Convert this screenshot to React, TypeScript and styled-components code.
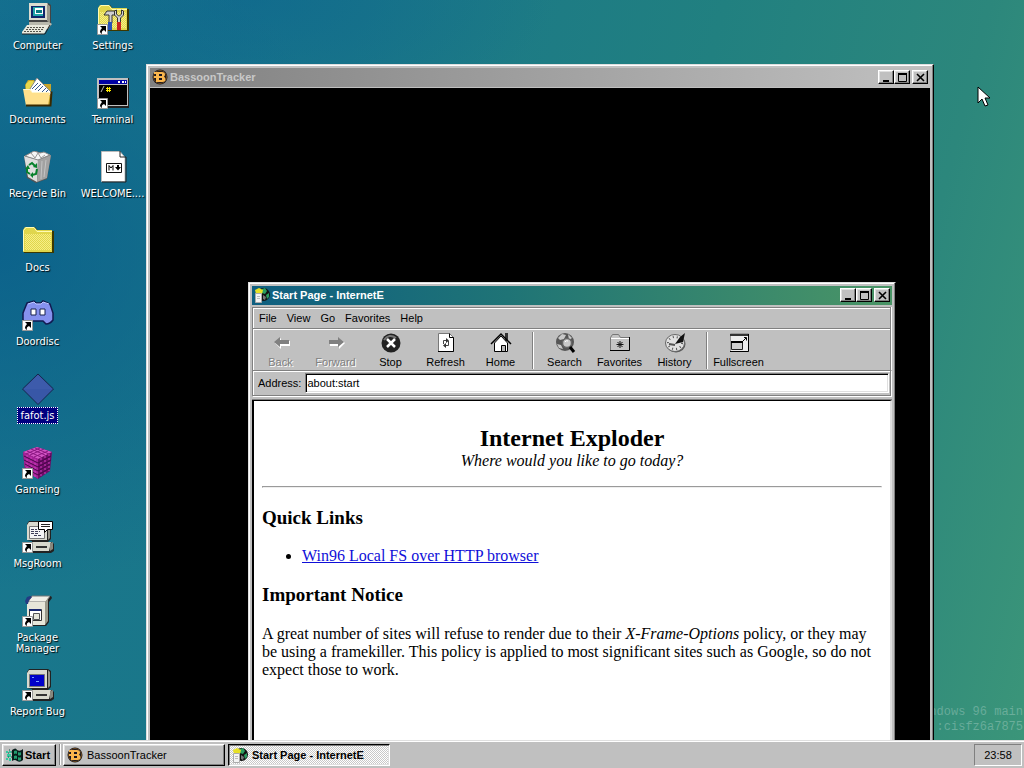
import React from "react";
import styled, { createGlobalStyle, css } from "styled-components";

const GlobalStyle = createGlobalStyle`
  * { box-sizing: border-box; }
  html, body, #root { height: 100%; margin: 0; }
  body { overflow: hidden; }
  button, input { font: inherit; color: inherit; }
`;

const raised = css`
  border: 1px solid;
  border-color: #fff #000 #000 #fff;
  box-shadow: inset -1px -1px 0 #808080, inset 1px 1px 0 #dfdfdf;
`;

/* ---------- Desktop ---------- */

const Screen = styled.div`
  display: flex;
  flex-direction: column;
  height: 100vh;
  font: 11px/14px "Liberation Sans", Arial, sans-serif;
  color: #000;
`;

const Desktop = styled.main`
  position: relative;
  flex: 1;
  min-height: 0;
  overflow: hidden;
  background:
    radial-gradient(ellipse 36% 46% at 0% 34%, rgba(8, 92, 138, 0.75), rgba(8, 92, 138, 0)),
    radial-gradient(ellipse 30% 18% at 24% 0%, rgba(12, 100, 142, 0.6), rgba(12, 100, 142, 0)),
    linear-gradient(104deg, #187690 0%, #1a7789 30%, #218080 60%, #2c877c 82%, #3b9579 100%);
`;

const IconGrid = styled.div`
  display: grid;
  height: 100%;
  grid-auto-flow: column;
  grid-template-rows: repeat(auto-fill, 74px);
  grid-auto-columns: 75px;
  justify-content: start;
`;

const Shortcut = styled.button`
  display: flex;
  flex-direction: column;
  align-items: center;
  gap: 2px;
  padding: 3px 0 0;
  border: 0;
  background: none;
`;

const ShortcutLabel = styled.span<{ $selected?: boolean }>`
  max-width: 72px;
  padding: 2px;
  border: 1px dotted ${(p) => (p.$selected ? "#fff" : "transparent")};
  background: ${(p) => (p.$selected ? "#000080" : "none")};
  font: 11px/11px "DejaVu Sans Condensed", "DejaVu Sans", sans-serif;
  color: #fff;
  text-shadow: ${(p) => (p.$selected ? "none" : "1px 1px 1px #000")};
`;

const BuildMark = styled.p`
  position: absolute;
  right: 1px;
  bottom: 5px;
  margin: 0;
  text-align: right;
  font: 12px/15px "Liberation Mono", monospace;
  color: rgba(255, 255, 255, 0.25);
`;

const Pointer = styled.svg`
  position: absolute;
  left: 977px;
  top: 86px;
`;

/* ---------- Windows ---------- */

const Frame = styled.section<{ $x: number; $y: number; $w: number; $h: number }>`
  position: absolute;
  left: ${(p) => p.$x}px;
  top: ${(p) => p.$y}px;
  width: ${(p) => p.$w}px;
  height: ${(p) => p.$h}px;
  display: flex;
  flex-direction: column;
  gap: 1px;
  padding: 3px;
  background: #c0c0c0;
  border: 1px solid;
  border-color: #dfdfdf #000 #000 #dfdfdf;
  box-shadow: inset -1px -1px 0 #808080, inset 1px 1px 0 #fff;
`;

const TitleBar = styled.header<{ $active?: boolean }>`
  display: flex;
  align-items: center;
  flex: none;
  height: 19px;
  padding: 0 2px 1px;
  gap: 2px;
  background: ${(p) =>
    p.$active
      ? "linear-gradient(90deg, #0f5f80, #1f7476 40%, #4a9566)"
      : "linear-gradient(90deg, #808080, #c0c0c0)"};
  color: ${(p) => (p.$active ? "#fff" : "#c8c8c8")};
`;

const Title = styled.h1`
  flex: 1;
  margin: 0;
  font-size: 11px;
  line-height: 14px;
  font-weight: bold;
`;

const CaptionGroup = styled.div`
  display: flex;
`;

const CaptionButton = styled.button`
  display: flex;
  width: 16px;
  height: 14px;
  padding: 1px 2px;
  background: #c0c0c0;
  color: #000;
  ${raised}
`;

const BlackCanvas = styled.div`
  flex: 1;
  background: #000;
`;

/* ---------- Browser ---------- */

const Band = styled.div`
  display: flex;
  flex: none;
  border: 1px solid #808080;
  border-bottom: 0;
  box-shadow: inset 1px 1px 0 #fff, 1px 0 0 #fff;
`;

const MenuBand = styled(Band)`
  height: 21px;
  margin-top: 1px;
  padding: 2px 3px 2px;
`;

const MenuItem = styled.button`
  padding: 0 3px;
  margin-right: 4px;
  border: 0;
  background: none;
`;

const ToolBand = styled(Band)`
  height: 42px;
  padding: 3px 0 1px;
`;

const ToolButton = styled.button`
  display: flex;
  flex-direction: column;
  align-items: center;
  width: 55px;
  padding: 0;
  gap: 1px;
  border: 0;
  background: none;
  white-space: nowrap;
  &:disabled {
    color: #808080;
    text-shadow: 1px 1px 0 #fff;
  }
`;

const Divider = styled.span`
  width: 2px;
  margin: 0 3px 0 4px;
  border-left: 1px solid #808080;
  border-right: 1px solid #fff;
`;

const AddressBand = styled(Band)`
  align-items: center;
  height: 26px;
  gap: 4px;
  padding: 0 1px 1px 5px;
  border-bottom: 1px solid #808080;
  box-shadow: inset 1px 1px 0 #fff, 1px 1px 0 #fff;
`;

const AddressInput = styled.input`
  flex: 1;
  min-width: 0;
  height: 20px;
  padding: 0 1px;
  background: #fff;
  border: 1px solid;
  border-color: #808080 #fff #fff #808080;
  box-shadow: inset 1px 1px 0 #000, inset -1px -1px 0 #dfdfdf;
  outline: 0;
`;

const Toolbars = styled.div`
  display: flex;
  flex-direction: column;
  padding-right: 1px;
  margin-bottom: 3px;
`;

const Viewport = styled.div`
  flex: 1;
  min-height: 0;
  overflow: hidden;
  padding: 24px 8px 0;
  background: #fff;
  border: 2px solid;
  border-color: #000 #dfdfdf #dfdfdf #000;
  border-top-width: 1px;
  box-shadow: 0 -1px 0 #808080;
  font: 16px/18px "Liberation Serif", "Times New Roman", serif;
`;

const PageHead = styled.div`
  text-align: center;
  margin-bottom: 16px;
`;

const PageTitle = styled.h2`
  margin: 0;
  font-size: 24px;
  line-height: 27px;
`;

const Rule = styled.hr`
  height: 2px;
  margin: 0;
  border: 1px solid;
  border-color: #9a9a9a #eee #eee #9a9a9a;
`;

const Heading = styled.h3`
  margin: 19px 0 18px;
  font-size: 19px;
  line-height: 22px;
`;

const Links = styled.ul`
  margin: 0;
  padding-left: 40px;
`;

const PageLink = styled.a`
  color: #0f0fd8;
`;

const Text = styled.p`
  margin: 19px 0 0;
`;

/* ---------- Taskbar ---------- */

const Taskbar = styled.footer`
  display: flex;
  flex: none;
  height: 28px;
  gap: 3px;
  padding: 2px;
  background: #c0c0c0;
  border-top: 1px solid #dfdfdf;
  box-shadow: inset 0 1px 0 #fff;
`;

const StartButton = styled.button`
  display: flex;
  align-items: center;
  width: 54px;
  gap: 2px;
  height: 22px;
  margin-top: 1px;
  padding: 0 2px 0 3px;
  background: #c0c0c0;
  font-weight: bold;
  ${raised}
`;

const Grip = styled.span`
  width: 2px;
  margin: 1px -1px 1px 0;
  border-left: 1px solid #808080;
  border-right: 1px solid #fff;
`;

const TaskButton = styled.button<{ $active?: boolean }>`
  display: flex;
  align-items: center;
  flex: 0 1 162px;
  height: 22px;
  gap: 4px;
  margin-top: 1px;
  padding: 0 3px;
  background: #c0c0c0;
  text-align: left;
  ${raised}
  ${(p) =>
    p.$active &&
    css`
      font-weight: bold;
      background: repeating-conic-gradient(#fff 0 25%, #c8c8c8 0 50%) 0 0 / 2px 2px;
      border-color: #000 #fff #fff #000;
      box-shadow: inset 1px 1px 0 #808080, inset -1px -1px 0 #dfdfdf;
    `}
`;

const Clock = styled.time`
  width: 48px;
  height: 22px;
  margin: 1px 0 0 auto;
  line-height: 20px;
  text-align: center;
  border: 1px solid;
  border-color: #808080 #fff #fff #808080;
`;

/* ---------- Drawings ---------- */

const Icon32 = ({ children }: { children: React.ReactNode }) => (
  <svg width="32" height="32" viewBox="0 0 32 32" aria-hidden="true">{children}</svg>
);

const LinkArrow = () => (
  <g>
    <path d="M.5 21.500h10v10h-10z" fill="#fff" stroke="#999" />
    <path d="M3 23h6v6L7 27q-3 1-2 4Q1 29 5 25z" fill="#000" />
  </g>
);

const ComputerIcon = () => (
  <Icon32>
    <path d="M8 0h18l3 2v20l-3 2H10l-3-4z" fill="#444" />
    <path d="M7 0h18l1 1v16H7z" fill="#dcdcd0" />
    <path d="M25 1l3 2v17l-3-2z" fill="#99998c" />
    <path d="M9 3h14v12H9z" fill="#10256a" />
    <path d="M11 4h10v9H11z" fill="#22a5aa" />
    <path d="M13 5h8v6h-8z" fill="#fff" /><path d="M14 7h6v3h-6z" fill="#087b84" />
    <path d="M7 19h20l3 2-4 5H7z" fill="#b9b9ad" />
    <path d="M5 22h22l-5 9H0v-2z" fill="#e9e9dd" />
    <path d="M5 24.500h18M4 26.500h18M2 28.500h18" stroke="#55554c" strokeDasharray="2 1" />
    <path d="M0 31h23l5-9" fill="none" stroke="#222" />
  </Icon32>
);

const OpenFolderIcon = () => (
  <Icon32>
    <path d="M3 8l3-5h6l3 4h14v21H5z" fill="#c8a52b" />
    <path d="M4 7l3-3h4l3 3v9H4z" fill="#e8d94c" />
    <path d="M6 15L15 1l15 15-3 3H7z" fill="#fff" stroke="#888" />
    <path d="M10 12l6-6M13 13l6-6M16 14l5-5M20 15l4-4M24 15l2-2" stroke="#35588c" />
    <path d="M1 12h7l2 3h15l3 1-2 13H4z" fill="#ffe08c" />
    <path d="M1.500 12.500H8l2 3h16" fill="none" stroke="#fff6ca" />
    <path d="M4 28.500h24.500l1-14" fill="none" stroke="#3a2900" strokeWidth="2" />
  </Icon32>
);

const BinIcon = () => (
  <Icon32>
    <path d="M2 5L13 0l16 4-4 24-11 4-9-5z" fill="#555" />
    <path d="M2 5l14 4-1 22-9-5z" fill="#dedede" />
    <path d="M16 9l13-5-4 23-10 4z" fill="#a2a2a2" />
    <path d="M3 5l9-5 6 2 4-1 6 3-12 5z" fill="#f6f6f6" stroke="#888" />
    <path d="M9 2l4 5 3-5 3 5 4-3" fill="none" stroke="#999" />
    <path d="M20 10l-1 18M24 9l-2 17" stroke="#c4c4c4" />
    <g fill="none" stroke="#07812c" strokeWidth="2">
      <path d="M7 14l3-2 3 3M5 17v4l3 2M15 18l-1 5-4 1" />
    </g>
    <path d="M15 12v5l-4-1zM3 18l3-4 2 4zM11 21v6l-3-3z" fill="#07812c" />
  </Icon32>
);

const FolderShape = () => (
  <g>
    <path d="M2 9V5l2-3h9l3 4h16v22H2z" fill="#3d3800" />
    <path d="M1 8V5l2-3h9l3 3h15v22H1z" fill="#e0d64c" />
    <path d="M1.500 26V5.500L4 2.500h8l3 4h15" fill="none" stroke="#fffcb5" />
    <path d="M3 9.500h26M3 11.500h26M3 13.500h26M3 15.500h26M3 17.500h26M3 19.500h26M3 21.500h26M3 23.500h26" stroke="#f7ee86" strokeDasharray="1 1" />
    <path d="M4 10.500h25M4 12.500h25M4 14.500h25M4 16.500h25M4 18.500h25M4 20.500h25M4 22.500h25M4 24.500h25" stroke="#f7ee86" strokeDasharray="1 1" />
  </g>
);

const FolderIcon = () => <Icon32><FolderShape /></Icon32>;

const SettingsIcon = () => (
  <Icon32>
    <FolderShape />
    <path d="M7 12l3-4h8v4h-3v8h-3v-8z" fill="#d0d0d0" stroke="#333" />
    <path d="M19.500 7v4l2 2h1l2-2V7l2 1v4l-3 3v5h-3v-5l-3-3V8z" fill="#d0d0d0" stroke="#333" />
    <path d="M11 19h4v8h-4z" fill="#2752b8" /><path d="M20 19h4v8h-4z" fill="#c42323" />
    <LinkArrow />
  </Icon32>
);

const TerminalIcon = () => (
  <Icon32>
    <path d="M0 1h32v30H0z" fill="#222" /><path d="M0 1h31v28H0z" fill="#c0c0c0" />
    <path d="M2 3h28v4H2z" fill="#0000a5" /><path d="M2 8h28v20H2z" fill="#000" />
    <path d="M21 5h2M25 5h2M28 5h1" stroke="#fff" strokeWidth="2" />
    <path d="M4 15l3-6" stroke="#bbb" /><path d="M10.500 10v5M12.500 10v5M9 11.500h5M9 13.500h5" stroke="#ffe900" />
    <LinkArrow />
  </Icon32>
);

const MarkdownIcon = () => (
  <Icon32>
    <path d="M4.500.500H23l5 6v24H4.500z" fill="#fff" stroke="#bbb" />
    <path d="M23 0v6h6v25H5" fill="none" stroke="#222" />
    <path d="M9.500 12.500h15v9h-15z" fill="#fff" stroke="#111" />
    <path d="M12 19.500v-5l2 2.500 2-2.500v5" fill="none" stroke="#000" />
    <path d="M20 14h2v2h2l-3 3.500-3-3.500h2z" />
  </Icon32>
);

const DoordiscIcon = () => (
  <Icon32>
    <path d="M5 4l7-2 2 2h5l2-2 7 3 3 9v7q-3 4-7 4l-3-3H11l-3 3q-5-1-7-4v-7z" fill="#8591ee" stroke="#111b51" strokeWidth="1.500" />
    <path d="M6 5l6-2 2 2h5l2-2 6 2" fill="none" stroke="#bcc7ff" />
    <path d="M9 10h5v6H9zM18 10h5v6h-5z" fill="#fff" stroke="#18204f" />
    <LinkArrow />
  </Icon32>
);

const DiamondIcon = () => (
  <Icon32>
    <path d="M16 1l15.500 15L16 31.500.500 16z" fill="#3857a7" stroke="#17264c" />
    <path d="M16 2L2 16h28z" fill="#4866b5" opacity=".3" />
  </Icon32>
);

const CubeIcon = () => (
  <Icon32>
    <path d="M1 5L15 0l15 5-2 19-12 8L3 23z" fill="#6e0c67" />
    <path d="M1 5L15 0l15 5-14 7z" fill="#d255c4" /><path d="M1 5l15 7v20L3 23z" fill="#a52398" />
    <path d="M5 4l14 6M9 2l14 6M13 1l14 6M26 4l-14 6M22 2L8 8M18 1L4 7" stroke="#8b1681" />
    <path d="M5 8v16M9 10v17M13 12v18M19 11v19M23 9v18M27 7v17" stroke="#d13ec2" strokeDasharray="2 2" />
    <path d="M2 9l14 7 13-7M2 13l14 7 13-7M3 17l13 7 12-7M3 21l13 7 12-7" fill="none" stroke="#48074a" />
    <LinkArrow />
  </Icon32>
);

const PcBase = ({ screen }: { screen: string }) => (
  <g>
    <path d="M7 0h19l3 2v16l-3 3h4l2 2v7l-3 2H10V20l-5-1V3z" fill="#222" />
    <path d="M7 1h18v18H5V4z" fill="#dadacf" /><path d="M26 1l2 2v14l-2 2z" fill="#96968b" />
    <path d="M7.500 5.500h15v12h-15z" fill={screen} stroke="#777" />
    <path d="M9 21h20l-2 9H9z" fill="#d9d9ce" /><path d="M28 22l3-1v7l-3 2z" fill="#88887e" />
    <path d="M14 26h11" stroke="#333" strokeWidth="2" />
  </g>
);

const MsgIcon = () => (
  <Icon32>
    <PcBase screen="#f4f4f4" />
    <path d="M9 8.500h6M9 10.500h9M9 12.500h7M12 14.500h7" stroke="#3e3e58" strokeDasharray="3 1" />
    <path d="M16.500.500h14v8h-5l-3 3v-3h-6z" fill="#fff" stroke="#000" />
    <path d="M19 3.500h9M19 5.500h9" stroke="#222" />
    <LinkArrow />
  </Icon32>
);

const PackageIcon = () => (
  <Icon32>
    <path d="M5 5l4-4h20l1 2-3 4v20l-3 4H6z" fill="#222" />
    <path d="M6 7l4-6h18l-4 6z" fill="#f0f0e8" stroke="#777" /><path d="M5 7h18v23H5z" fill="#e6e6da" />
    <path d="M23 7l3-4v23l-3 4z" fill="#99998b" />
    <path d="M3 6l2-4 3-1 2 1-3 3-1 4H4z" fill="#233b83" />
    <path d="M7.500 14.500h12v11h-12z" fill="#fff" stroke="#333" /><path d="M7 14h12v2H7z" fill="#17276f" />
    <path d="M11.500 18.500h6v6h-6z" fill="#e6e6da" stroke="#555" />
    <LinkArrow />
  </Icon32>
);

const BugIcon = () => (
  <Icon32>
    <PcBase screen="#0000c8" />
    <path d="M10 8.500h2M14 12.500h3" stroke="#7aa0ff" />
    <LinkArrow />
  </Icon32>
);

const BassoonIcon = () => (
  <svg width="16" height="16" viewBox="0 0 16 16" aria-hidden="true">
    <circle cx="8" cy="8" r="7.500" fill="#17151f" />
    <circle cx="8" cy="8" r="6.500" fill="none" stroke="#6b4a20" />
    <path fillRule="evenodd" d="M2 3h8q3 0 3 2.500 0 1.500-1 2.300 1.500.700 1.500 2.500 0 2.700-3 2.700H4V9H2V7h2V5H2zM7 5v2h3V5zM7 9v2h3V9z" fill="#f9b54c" />
  </svg>
);

const BrowserIcon = () => (
  <svg width="16" height="16" viewBox="0 0 16 16" aria-hidden="true">
    <circle cx="9.500" cy="7.500" r="6.500" fill="#111" />
    <path d="M8 2l3-1 2 3-2 3-3-1zM12 8l3-2v4l-2 2z" fill="#2b9d60" />
    <path d="M9 8l3 2-1 3-2-1z" fill="#777" />
    <path d="M1 3l4-2 4 2-1 4H2z" fill="#e7e126" />
    <path d="M1.500 6.500h6v9h-6z" fill="#f4f4f4" stroke="#aaa" />
    <path d="M3 9.500h3M3 11.500h3" stroke="#bbb" />
  </svg>
);

const FlagIcon = () => (
  <svg width="17" height="16" viewBox="0 0 17 16" aria-hidden="true">
    <path d="M6 3q4-3 5 0 3 2 6-1v11q-3 3-6 1-2-2-5 0z" fill="#071d1b" />
    <path d="M8 4q2-1 3 0v3q-1-1-3 0zM12 5q2 1 3 0v3q-2 1-3 0zM8 9q2-1 3 0v3q-1-1-3 0zM12 10q2 1 3 0v3q-2 1-3 0z" fill="#219d70" />
    <path d="M0 4h2v2H0zM3 4h2v2H3zM1 7h4v3H1zM0 11h2v2H0zM3 11h2v3H3z" fill="#33caa0" />
    <path d="M3 3h1M2 6h1M5 5h1M2 10h1M5 10h1" stroke="#054b43" />
  </svg>
);

const Tool = ({ children }: { children: React.ReactNode }) => (
  <svg width="22" height="22" viewBox="0 0 22 22" aria-hidden="true">{children}</svg>
);

const toolArt: Record<string, React.ReactNode> = {
  Back: <Tool><path d="M5 11l6-5v3h9v5h-9v3z" fill="#fff" /><path d="M4 10l6-5v3h9v4h-9v3z" fill="#808080" /></Tool>,
  Forward: <Tool><path d="M20 11l-6-5v3H5v5h9v3z" fill="#fff" /><path d="M19 10l-6-5v3H4v4h9v3z" fill="#808080" /></Tool>,
  Stop: (
    <Tool>
      <circle cx="11" cy="11" r="9.500" fill="#222" />
      <path d="M4 8q5-7 12-2" stroke="#777" strokeWidth="2" fill="none" />
      <path d="M7 7l8 8M15 7l-8 8" stroke="#fff" strokeWidth="2.500" />
    </Tool>
  ),
  Refresh: (
    <Tool>
      <path d="M3.500 1.500h11l4 4v14h-15z" fill="#fff" stroke="#777" />
      <path d="M14.500 1.500v4h4v14H3" fill="none" stroke="#000" />
      <path d="M8.500 12V8.500H11M13.500 9v4.500H11" fill="none" stroke="#444" />
      <path d="M11 6l3 2.500-3 2.500zM11 11l-3 2.500 3 2.500z" fill="#333" />
    </Tool>
  ),
  Home: (
    <Tool>
      <path d="M15 1h3v8h-3z" fill="#333" />
      <path d="M4.500 11v8.500h13V11L11 4z" fill="#fff" stroke="#000" />
      <path d="M1 12L11 2l10 10" fill="none" stroke="#000" strokeWidth="1.500" />
      <path d="M11.500 13.500h4v6h-4z" fill="#bbb" stroke="#000" />
    </Tool>
  ),
  Search: (
    <Tool>
      <circle cx="11" cy="10" r="9" fill="#555" />
      <path d="M4 6l4-4 4 1-2 4-4 1zM14 2l4 4-3 2zM3 12l4 1 2 4-4-1z" fill="#c8c8c8" />
      <circle cx="13" cy="11" r="4.500" fill="#c9c9c9" stroke="#666" strokeWidth="1.500" />
      <path d="M11 10q1-2 3-1" stroke="#fff" fill="none" />
      <path d="M16 15l4 5" stroke="#000" strokeWidth="3" />
    </Tool>
  ),
  Favorites: (
    <Tool>
      <path d="M1.500 18.500V5.500l2-3h6l2 3h9v13z" fill="#c4c4c4" stroke="#777" />
      <path d="M2 6.500h18" stroke="#fff" /><path d="M1 18.500h19.500V5" fill="none" stroke="#000" />
      <path d="M11 9v7M7.500 12.500h7M8.500 10l5 5M13.500 10l-5 5" stroke="#111" />
    </Tool>
  ),
  History: (
    <Tool>
      <ellipse cx="12" cy="12" rx="9.500" ry="8.500" fill="#555" />
      <ellipse cx="11" cy="11" rx="9.500" ry="8.500" fill="#e1e1e1" stroke="#666" />
      <ellipse cx="11" cy="11" rx="7" ry="6" fill="none" stroke="#555" strokeWidth="2" strokeDasharray="1 3" />
      <path d="M11 12l5-7 5-4-2 9z" fill="#111" /><path d="M5 12l6 1" stroke="#555" strokeWidth="2" />
    </Tool>
  ),
  Fullscreen: (
    <Tool>
      <path d="M2.500 1.500h18v18h-18z" fill="#eee" stroke="#999" /><path d="M2 3h18" stroke="#333" strokeWidth="2" />
      <path d="M2 19.500h18.500V2" fill="none" stroke="#000" />
      <path d="M3.500 10.500h11v7h-11z" fill="#d0d0d0" stroke="#222" /><path d="M3 10h12" stroke="#000" strokeWidth="2" />
      <path d="M15 9l3-3M16 5.500h2.500v3" fill="none" stroke="#000" />
    </Tool>
  ),
};

const Glyph = ({ children }: { children: React.ReactNode }) => (
  <svg width="10" height="10" viewBox="0 0 10 10" fill="none" stroke="#000" aria-hidden="true">
    {children}
  </svg>
);

/* ---------- Content ---------- */

const shortcuts: { label: string; art: React.ReactNode; selected?: boolean }[] = [
  { label: "Computer", art: <ComputerIcon /> },
  { label: "Documents", art: <OpenFolderIcon /> },
  { label: "Recycle Bin", art: <BinIcon /> },
  { label: "Docs", art: <FolderIcon /> },
  { label: "Doordisc", art: <DoordiscIcon /> },
  { label: "fafot.js", art: <DiamondIcon />, selected: true },
  { label: "Gameing", art: <CubeIcon /> },
  { label: "MsgRoom", art: <MsgIcon /> },
  { label: "Package Manager", art: <PackageIcon /> },
  { label: "Report Bug", art: <BugIcon /> },
  { label: "Settings", art: <SettingsIcon /> },
  { label: "Terminal", art: <TerminalIcon /> },
  { label: "WELCOME....", art: <MarkdownIcon /> },
];

const WindowTitle = ({ icon, title, active }: { icon: React.ReactNode; title: string; active?: boolean }) => (
  <TitleBar $active={active}>
    {icon}
    <Title>{title}</Title>
    <CaptionGroup>
      <CaptionButton aria-label="Minimize"><Glyph><path d="M2 9h6" strokeWidth="2" /></Glyph></CaptionButton>
      <CaptionButton aria-label="Maximize">
        <Glyph><path d="M1 2h9" strokeWidth="2" /><path d="M1.500 2v7.500h8V2" /></Glyph>
      </CaptionButton>
    </CaptionGroup>
    <CaptionButton aria-label="Close"><Glyph><path d="M2 2l7 7M9 2L2 9" strokeWidth="1.600" /></Glyph></CaptionButton>
  </TitleBar>
);

const ToolItem = ({ name, disabled }: { name: string; disabled?: boolean }) => (
  <ToolButton disabled={disabled}>
    {toolArt[name]}
    {name}
  </ToolButton>
);

export default function App() {
  return (
    <Screen>
      <GlobalStyle />
      <Desktop>
        <IconGrid>
          {shortcuts.map((s) => (
            <Shortcut key={s.label}>
              {s.art}
              <ShortcutLabel $selected={s.selected}>{s.label}</ShortcutLabel>
            </Shortcut>
          ))}
        </IconGrid>
        <BuildMark>Windows 96 main<br />:cisfz6a7875</BuildMark>

        <Frame $x={146} $y={64} $w={788} $h={720}>
          <WindowTitle icon={<BassoonIcon />} title="BassoonTracker" />
          <BlackCanvas />
        </Frame>

        <Frame $x={248} $y={282} $w={648} $h={500}>
          <WindowTitle icon={<BrowserIcon />} title="Start Page - InternetE" active />
          <Toolbars>
            <MenuBand as="nav">
              {["File", "View", "Go", "Favorites", "Help"].map((m) => (
                <MenuItem key={m}>{m}</MenuItem>
              ))}
            </MenuBand>
            <ToolBand>
              <ToolItem name="Back" disabled />
              <ToolItem name="Forward" disabled />
              <ToolItem name="Stop" />
              <ToolItem name="Refresh" />
              <ToolItem name="Home" />
              <Divider />
              <ToolItem name="Search" />
              <ToolItem name="Favorites" />
              <ToolItem name="History" />
              <Divider />
              <ToolItem name="Fullscreen" />
            </ToolBand>
            <AddressBand>
              <label htmlFor="address">Address:</label>
              <AddressInput id="address" defaultValue="about:start" />
            </AddressBand>
          </Toolbars>
          <Viewport>
            <PageHead>
              <PageTitle>Internet Exploder</PageTitle>
              <em>Where would you like to go today?</em>
            </PageHead>
            <Rule />
            <Heading>Quick Links</Heading>
            <Links>
              <li><PageLink href="#local-fs">Win96 Local FS over HTTP browser</PageLink></li>
            </Links>
            <Heading>Important Notice</Heading>
            <Text>
              A great number of sites will refuse to render due to their <em>X-Frame-Options</em> policy,
              or they may be using a framekiller. This policy is applied to most significant sites such as
              Google, so do not expect those to work.
            </Text>
          </Viewport>
        </Frame>

        <Pointer width="13" height="21" viewBox="0 0 13 21" aria-hidden="true">
          <path d="M1 1v16l4-4 3 7 3-1-3-7h5z" fill="#fff" stroke="#000" />
        </Pointer>
      </Desktop>

      <Taskbar>
        <StartButton><FlagIcon />Start</StartButton>
        <Grip />
        <TaskButton><BassoonIcon />BassoonTracker</TaskButton>
        <TaskButton $active><BrowserIcon />Start Page - InternetE</TaskButton>
        <Clock>23:58</Clock>
      </Taskbar>
    </Screen>
  );
}
